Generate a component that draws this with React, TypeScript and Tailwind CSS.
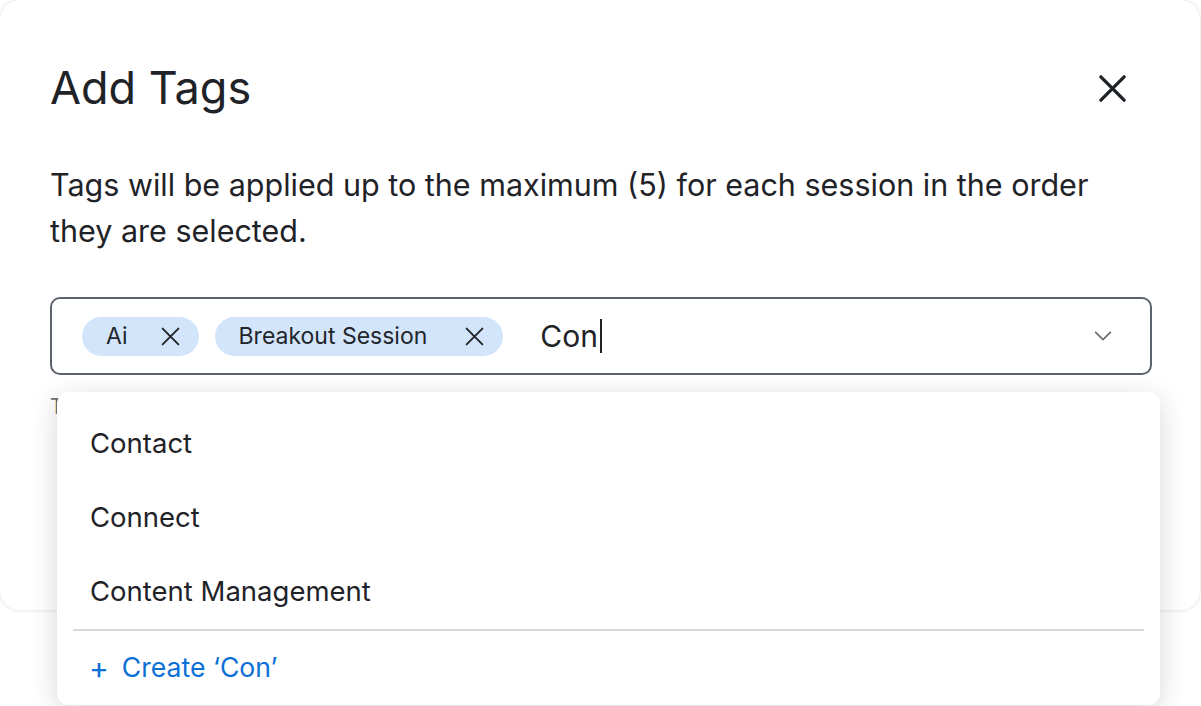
import React from "react";

const font = { fontFamily: "Inter, 'Noto Sans', sans-serif" };

function CloseIcon({ size = 30, stroke = 3 }: { size?: number; stroke?: number }) {
  return (
    <svg width={size} height={size} viewBox="0 0 24 24" fill="none" stroke="currentColor" strokeWidth={stroke} strokeLinecap="round">
      <path d="M3 3 21 21M21 3 3 21" />
    </svg>
  );
}

function Chip({ label, wide }: { label: string; wide?: boolean }) {
  return (
    <span
      className={`flex h-[39px] items-center rounded-full bg-[#d3e5fb] pl-[24px] pr-[18px] text-[23px] text-[#22262b] ${
        wide ? "gap-[37px]" : "gap-[32px]"
      }`}
    >
      {label}
      <span className="text-[#22262b]">
        <CloseIcon size={21} stroke={2.2} />
      </span>
    </span>
  );
}

const options = ["Contact", "Connect", "Content Management"];

export default function App() {
  return (
    <div className="relative h-[706px] w-[1201px] overflow-hidden bg-white" style={font}>
      <div className="h-[610px] w-[1200px] rounded-[20px] bg-white pl-[50px] pr-[48px] pt-[58px] shadow-[0_0_4px_rgba(0,0,0,0.14)]">
        <div className="flex items-center justify-between">
          <h1 className="text-[45px] leading-[60px] text-[#1f2328]">Add Tags</h1>
          <button className="mr-[24px] text-[#1f2328]">
            <CloseIcon size={31} stroke={2.6} />
          </button>
        </div>

        <p className="mt-[44px] text-[30.5px] leading-[46px] text-[#1f2328]">
          Tags will be applied up to the maximum (5) for each session in the order they are selected.
        </p>

        <div className="relative mt-[43px]">
          <div className="flex h-[78px] items-center gap-[16px] rounded-[10px] border-2 border-[#5c636c] pl-[30px] pr-[36px]">
            <Chip label="Ai" />
            <Chip label="Breakout Session" wide />
            <span className="ml-[21px] flex items-center text-[30px] text-[#1f2328]">
              Con
              <span className="ml-[2px] h-[34px] w-[2px] bg-[#1f2328]" />
            </span>
            <span className="ml-auto text-[#6b7078]">
              <svg width="22" height="22" viewBox="0 0 24 24" fill="none" stroke="currentColor" strokeWidth="2" strokeLinecap="round" strokeLinejoin="round">
                <path d="m4 8 8 8 8-8" />
              </svg>
            </span>
          </div>
          <p className="mt-[16px] text-[21px] text-[#6b7078]">Type to search or create a new tag</p>

          <div className="absolute left-[7px] right-[-8px] top-[95px] rounded-[12px] bg-white pt-[15px] shadow-[0_6px_28px_rgba(0,0,0,0.16)]">
            {options.map((o) => (
              <div key={o} className="flex h-[74px] items-center px-[33px] text-[27.5px] text-[#1f2328]">
                {o}
              </div>
            ))}
            <div className="mx-[16px] h-[2px] bg-[#d9d9d9]" />
            <div className="flex h-[74px] items-center gap-[13px] px-[32px] text-[26.6px] text-[#0b6fd6]">
              <span className="text-[30px] leading-none">+</span>
              Create ‘Con’
            </div>
          </div>
        </div>
      </div>
    </div>
  );
}
